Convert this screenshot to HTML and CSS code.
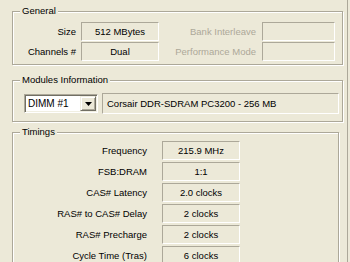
FILE: index.html
```html
<!DOCTYPE html>
<html>
<head>
<meta charset="utf-8">
<link rel="stylesheet" href="styles.css">
</head>
<body>
<div class="page">
  <div class="group g-general">
    <div class="legend">General</div>
    <div class="general-grid">
      <span class="lbl">Size</span>
      <span class="field">512 MBytes</span>
      <span class="lbl lbl-r dis">Bank Interleave</span>
      <span class="field"></span>
      <span class="lbl">Channels #</span>
      <span class="field">Dual</span>
      <span class="lbl lbl-r dis">Performance Mode</span>
      <span class="field"></span>
    </div>
  </div>
  <div class="group g-modules">
    <div class="legend">Modules Information</div>
    <div class="modules-row">
      <div class="combo">
        <span class="combo-text">DIMM #1</span>
        <span class="combo-btn"><svg width="7" height="4" viewBox="0 0 7 4"><path d="M0 0h7L3.5 4z" fill="#000"/></svg></span>
      </div>
      <div class="field desc">Corsair DDR-SDRAM PC3200 - 256 MB</div>
    </div>
  </div>
  <div class="group g-timings">
    <div class="legend">Timings</div>
    <div class="timings-grid">
      <span class="lbl">Frequency</span><span class="field">215.9 MHz</span>
      <span class="lbl">FSB:DRAM</span><span class="field">1:1</span>
      <span class="lbl">CAS# Latency</span><span class="field">2.0 clocks</span>
      <span class="lbl">RAS# to CAS# Delay</span><span class="field">2 clocks</span>
      <span class="lbl">RAS# Precharge</span><span class="field">2 clocks</span>
      <span class="lbl">Cycle Time (Tras)</span><span class="field">6 clocks</span>
    </div>
  </div>
</div>
</body>
</html>
```

FILE: styles.css
```css
html, body {
  margin: 0;
  padding: 0;
  background: #ECE9D8;
}
body {
  font-family: "Liberation Sans", Arial, sans-serif;
  font-size: 9.5px;
  color: #000;
  width: 350px;
  height: 262px;
  overflow: hidden;
}
.page {
  box-sizing: border-box;
  padding: 11px 0 0 12px;
  width: 348px;
  height: 262px;
  overflow: hidden;
  border-right: 1px solid #ACA899;
}
.group {
  width: 331px;
  box-sizing: border-box;
  border: 1px solid #ACA899;
  box-shadow: 1px 1px 0 #fff, inset 1px 1px 0 #fff;
}
.legend {
  margin: -7px 0 0 7px;
  padding: 0 2px;
  width: fit-content;
  line-height: 12px;
  height: 12px;
  background: #ECE9D8;
}
.g-general {
  padding-bottom: 3px;
}
.general-grid {
  margin-top: 5px;
  display: grid;
  grid-template-columns: 68px 78px 103px 73px;
  grid-auto-rows: 19px;
  row-gap: 1px;
}
.lbl {
  text-align: right;
  padding-right: 5px;
  line-height: 19px;
  white-space: nowrap;
}
.lbl-r {
  padding-right: 6px;
}
.dis {
  color: #ACA899;
}
.field {
  box-sizing: border-box;
  border: 1px solid;
  border-color: #ACA899 #fff #fff #ACA899;
  text-align: center;
  line-height: 17px;
  white-space: nowrap;
}
.g-modules {
  margin-top: 15px;
  padding-bottom: 7px;
}
.modules-row {
  margin-top: 7px;
  display: flex;
  align-items: center;
  padding-left: 11px;
  gap: 4px;
}
.combo {
  box-sizing: border-box;
  width: 74px;
  height: 19px;
  background: #fff;
  border: 1px solid;
  border-color: #ACA899 #fff #fff #ACA899;
  box-shadow: inset 1px 1px 0 #716F64, inset -1px -1px 0 #F1EFE2;
  display: flex;
  padding: 1px;
}
.combo-text {
  flex: 1;
  line-height: 15px;
  padding-left: 2px;
  font-size: 10px;
}
.combo-btn {
  box-sizing: border-box;
  width: 16px;
  height: 15px;
  background: #ECE9D8;
  border: 1px solid;
  border-color: #F1EFE2 #716F64 #716F64 #F1EFE2;
  box-shadow: inset 1px 1px 0 #fff, inset -1px -1px 0 #ACA899;
  display: flex;
  align-items: center;
  justify-content: center;
}
.desc {
  width: 237px;
  height: 21px;
  line-height: 19px;
  text-align: left;
  padding-left: 4px;
}
.g-timings {
  width: 327px;
  margin-top: 10px;
  padding-bottom: 4px;
}
.timings-grid {
  margin-top: 3px;
  display: grid;
  grid-template-columns: 149px 78px;
  grid-auto-rows: 19px;
  row-gap: 2px;
}
.timings-grid .lbl {
  padding-right: 15px;
}
```
